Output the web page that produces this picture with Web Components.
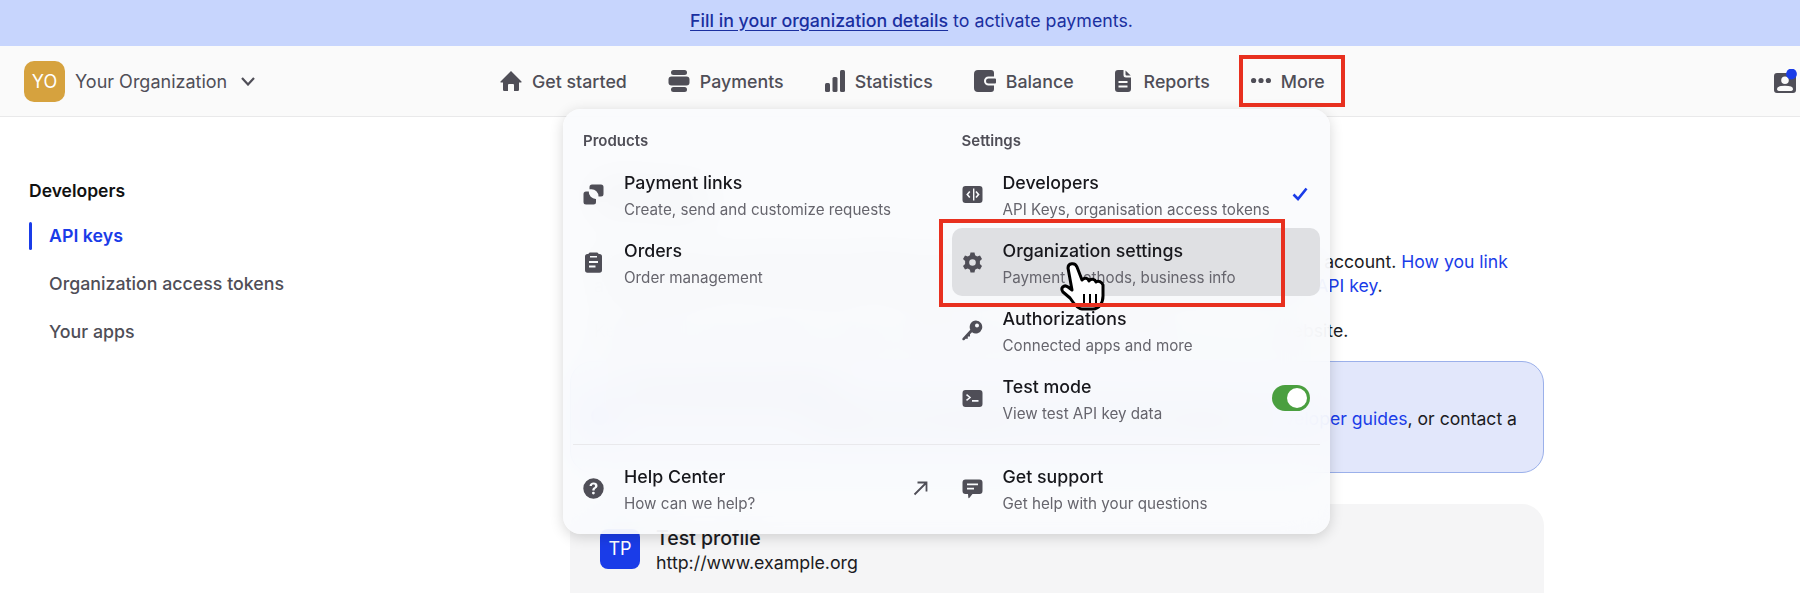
<!DOCTYPE html>
<html lang="en">
<head>
<meta charset="utf-8">
<title>API keys</title>
<style>
  html, body { margin: 0; height: 594px; overflow: hidden; background: #fff; }
  body { font-family: Inter, "Liberation Sans", sans-serif; position: relative; }
</style>
</head>
<body>
<notice-bar><a href="#">Fill in your organization details</a> to activate payments.</notice-bar>

<top-nav>
  <org-switch slot="org">Your Organization</org-switch>
  <nav-item>
    <svg slot="icon" width="22" height="22" viewBox="0 0 22 22"><path d="M11 1 L21.500 11.500 Q21.800 12.500 20.800 12.600 L19 12.600 V19.800 Q19 21 17.800 21 H14 V15 Q14 14 13 14 H9 Q8 14 8 15 V21 H4.200 Q3 21 3 19.800 V12.600 H1.200 Q.2 12.500 .5 11.500 Z"/></svg>
    Get started
  </nav-item>
  <nav-item>
    <svg slot="icon" width="22" height="22" viewBox="0 0 22 22"><rect x="3" y="0" width="16" height="5" rx="2.500"/><rect x="0.500" y="6.500" width="21" height="9" rx="3"/><rect x="3" y="17" width="16" height="5" rx="2.500"/></svg>
    Payments
  </nav-item>
  <nav-item>
    <svg slot="icon" width="20" height="22" viewBox="0 0 20 22"><rect x="0" y="13" width="5" height="9" rx="1.500"/><rect x="7.500" y="7" width="5" height="15" rx="1.500"/><rect x="15" y="0" width="5" height="22" rx="1.500"/></svg>
    Statistics
  </nav-item>
  <nav-item>
    <svg slot="icon" width="22" height="22" viewBox="0 0 22 22"><path fill-rule="evenodd" d="M4 0 H17 Q20 0 20 3 V6.500 H14.500 A4.500 4.500 0 0 0 14.500 15.500 H20 V19 Q20 22 17 22 H4 Q0 22 0 18 V4 Q0 0 4 0 Z"/><path d="M14.500 8.500 H21 Q22 8.500 22 9.500 V12.500 Q22 13.500 21 13.500 H14.500 A2.500 2.500 0 0 1 14.500 8.500 Z"/></svg>
    Balance
  </nav-item>
  <nav-item>
    <svg slot="icon" width="16" height="22" viewBox="0 0 16 22" style="margin-right:3px"><path fill-rule="evenodd" d="M3 0 H8.500 V5 Q8.500 7.500 11 7.500 H16 V19 Q16 22 13 22 H3 Q0 22 0 19 V3 Q0 0 3 0 Z M3.500 11 V13 H12.500 V11 Z M3.500 15.500 V17.500 H12.500 V15.500 Z"/><path d="M10.500 .4 L15.700 5.500 H11.500 Q10.500 5.500 10.500 4.500 Z"/></svg>
    Reports
  </nav-item>
  <nav-item>
    <svg slot="icon" width="20" height="22" viewBox="0 0 20 22"><circle cx="2.600" cy="10.500" r="2.600"/><circle cx="10" cy="10.500" r="2.600"/><circle cx="17.400" cy="10.500" r="2.600"/></svg>
    More
  </nav-item>
  <svg slot="end" width="24" height="24" viewBox="0 0 24 24"><path fill="#4f4e57" fill-rule="evenodd" d="M4 4 H20 Q23 4 23 7 V21 Q23 24 20 24 H4 Q1 24 1 21 V7 Q1 4 4 4 Z M12 7.500 A3.800 3.800 0 1 0 12 15.100 A3.800 3.800 0 1 0 12 7.500 Z M7 22 H17 Q20 22 20 20 Q20 16.800 12 16.800 Q4 16.800 4 20 Q4 22 7 22 Z"/><circle cx="18.500" cy="5" r="5.400" fill="#1a3ce8"/></svg>
</top-nav>

<page-body>
  <side-nav slot="side"></side-nav>
  <api-content></api-content>
</page-body>

<fly-menu>
  <menu-group slot="products" label="Products">
    <menu-item>
      <svg slot="icon" width="21" height="21" viewBox="0 0 21 21"><path d="M9 0.500 H18 Q20.500 0.500 20.500 3 V10 Q20.500 12.500 18 12.500 H15.500 A7 7 0 0 0 8 5.200 H6.500 V3 Q6.500 .5 9 .5 Z"/><path d="M3 7.500 H5.800 A7 7 0 0 0 13 15 V18 Q13 20.500 10.500 20.500 H3 Q.5 20.500 .5 18 V10 Q.5 7.500 3 7.500 Z"/></svg>
      Payment links
      <span slot="sub">Create, send and customize requests</span>
    </menu-item>
    <menu-item>
      <svg slot="icon" width="21" height="21" viewBox="0 0 21 21"><path fill-rule="evenodd" d="M7 0.500 H14 Q15.500 .5 15.500 2 H16.500 Q19 2 19 4.500 V18 Q19 20.800 16.500 20.800 H4.500 Q2 20.800 2 18 V4.500 Q2 2 4.500 2 H5.500 Q5.500 .5 7 .5 Z M7 4 V5.500 H14 V4 Z M6 9 V11 H15 V9 Z M6 13.500 V15.500 H12.500 V13.500 Z"/></svg>
      Orders
      <span slot="sub">Order management</span>
    </menu-item>
  </menu-group>

  <menu-group slot="settings" label="Settings">
    <menu-item>
      <svg slot="icon" width="21" height="21" viewBox="0 0 21 21"><path fill-rule="evenodd" d="M3.500 2 H17.500 Q20.500 2 20.500 5 V16 Q20.500 19 17.500 19 H3.500 Q.5 19 .5 16 V5 Q.5 2 3.500 2 Z M7.200 7 L4.200 10.500 L7.200 14 L8.400 13 L6.300 10.500 L8.400 8 Z M12.400 4.500 H11 V16.500 H12.400 Z M14.600 7 L13.400 8 L15.500 10.500 L13.400 13 L14.600 14 L17.600 10.500 Z"/></svg>
      Developers
      <span slot="sub">API Keys, organisation access tokens</span>
      <svg slot="end" width="16" height="14" viewBox="0 0 16 14" fill="none" stroke="#1a3ce8" stroke-width="2.600" style="margin-right:2px"><path d="M1.500 7.500 L6 12 L14.500 1.500"/></svg>
    </menu-item>
    <menu-item active>
      <svg slot="icon" width="21" height="21" viewBox="0 0 21 21"><path fill-rule="evenodd" d="M8.500 .5 H12.500 L13.100 3.300 L15.200 4.500 L18 3.600 L20 7 L17.900 9 V12 L20 14 L18 17.400 L15.200 16.500 L13.100 17.700 L12.500 20.500 H8.500 L7.900 17.700 L5.800 16.500 L3 17.400 L1 14 L3.100 12 V9 L1 7 L3 3.600 L5.800 4.500 L7.900 3.300 Z M10.500 7.200 A3.300 3.300 0 1 0 10.500 13.800 A3.300 3.300 0 1 0 10.500 7.200 Z"/></svg>
      Organization settings
      <span slot="sub">Payment methods, business info</span>
    </menu-item>
    <menu-item>
      <svg slot="icon" width="21" height="21" viewBox="0 0 21 21"><path fill-rule="evenodd" d="M14 0.500 A6.500 6.500 0 1 1 10 12.300 L8 14.300 V16.500 H5.800 V18.700 H3.600 L2.500 20 Q1.200 20.800 .5 19.800 Q0 19 .8 18 L8.300 9.800 A6.500 6.500 0 0 1 14 .5 Z M15 3.500 A2 2 0 1 0 15 7.500 A2 2 0 1 0 15 3.500 Z"/></svg>
      Authorizations
      <span slot="sub">Connected apps and more</span>
    </menu-item>
    <menu-item>
      <svg slot="icon" width="21" height="21" viewBox="0 0 21 21"><path fill-rule="evenodd" d="M3.500 2 H17.500 Q20.500 2 20.500 5 V16 Q20.500 19 17.500 19 H3.500 Q.5 19 .5 16 V5 Q.5 2 3.500 2 Z M5 6 L4 7.200 L7 9.500 L4 11.800 L5 13 L9.200 9.500 Z M10 12 V13.800 H16.500 V12 Z"/></svg>
      Test mode
      <span slot="sub">View test API key data</span>
      <toggle-switch slot="end"></toggle-switch>
    </menu-item>
  </menu-group>

  <menu-item slot="foot-left">
    <svg slot="icon" width="21" height="21" viewBox="0 0 21 21"><path fill-rule="evenodd" d="M10.500 .3 A10.200 10.200 0 1 0 10.500 20.700 A10.200 10.200 0 1 0 10.500 .3 Z M10.600 4.500 C8.200 4.500 6.700 5.800 6.500 8 H8.900 C9 7.100 9.600 6.600 10.500 6.600 C11.400 6.600 12 7.100 12 7.900 C12 8.600 11.600 9 10.800 9.600 C9.700 10.400 9.300 11.100 9.300 12.600 H11.600 C11.600 11.700 11.800 11.300 12.700 10.600 C13.700 9.900 14.500 9.100 14.500 7.700 C14.500 5.700 12.900 4.500 10.600 4.500 Z M10.400 13.700 A1.400 1.400 0 1 0 10.400 16.500 A1.400 1.400 0 1 0 10.400 13.700 Z"/></svg>
    Help Center
    <span slot="sub">How can we help?</span>
    <svg slot="end" width="15" height="15" viewBox="0 0 15 15" fill="none" stroke="#4f4e57" stroke-width="1.800" style="margin-right:4px"><path d="M1.500 13.500 L13.500 1.500 M4.500 1.500 H13.500 V10.500"/></svg>
  </menu-item>
  <menu-item slot="foot-right">
    <svg slot="icon" width="21" height="21" viewBox="0 0 21 21"><path fill-rule="evenodd" d="M3.500 1.500 H17.500 Q20.500 1.500 20.500 4.500 V13 Q20.500 16 17.500 16 H10.500 L7.500 19.800 Q6.500 20.600 6.300 19.500 L6 16 H3.500 Q.5 16 .5 13 V4.500 Q.5 1.500 3.500 1.500 Z M5 5.500 V7.300 H16 V5.500 Z M5 9.800 V11.600 H12 V9.800 Z"/></svg>
    Get support
    <span slot="sub">Get help with your questions</span>
  </menu-item>
</fly-menu>

<hand-cursor></hand-cursor>
<mark-box style="left:1239px;top:55px;width:106px;height:52px"></mark-box>
<mark-box style="left:939px;top:219px;width:346px;height:88px"></mark-box>

<script>
const TEXT = "#4f4e57";
const BLUE = "#1a3ce8";

class NoticeBar extends HTMLElement {
  connectedCallback() {
    this.attachShadow({ mode: "open" }).innerHTML = `
      <style>
        :host { display:flex; align-items:center; justify-content:center; height:46px; box-sizing:border-box; padding:0 0 6px 23px;
          background:#c7d5fd; color:#1a2fa0; font-size:17.8px; font-weight:400; }
        ::slotted(a) { color:#1a2fa0; font-weight:500; text-decoration:underline; text-underline-offset:3px; }
      </style>
      <div><slot></slot></div>`;
  }
}
customElements.define("notice-bar", NoticeBar);

class OrgSwitch extends HTMLElement {
  connectedCallback() {
    this.attachShadow({ mode: "open" }).innerHTML = `
      <style>
        :host { display:flex; align-items:center; color:${TEXT}; font-size:18px; }
        .logo { width:41px; height:41px; border-radius:10px; background:#d6a23e; color:#fff;
          display:flex; align-items:center; justify-content:center; font-size:18px; margin-right:10px; }
        svg { margin-left:14px; }
      </style>
      <span class="logo">YO</span>
      <slot></slot>
      <svg width="14" height="9" viewBox="0 0 14 9" fill="none" stroke="${TEXT}" stroke-width="2.200"><path d="M1 1 L7 7.500 L13 1"/></svg>`;
  }
}
customElements.define("org-switch", OrgSwitch);

class TopNav extends HTMLElement {
  connectedCallback() {
    this.attachShadow({ mode: "open" }).innerHTML = `
      <style>
        :host { display:grid; grid-template-columns:476px auto 1fr; align-items:center; height:71px;
          box-sizing:border-box; padding:0 3px 0 24px; background:#fafafa; border-bottom:1px solid #e9e9ea; }
        nav { display:flex; gap:41px; }
        .end { justify-self:end; display:flex; }
      </style>
      <slot name="org"></slot>
      <nav><slot></slot></nav>
      <div class="end"><slot name="end"></slot></div>`;
  }
}
customElements.define("top-nav", TopNav);

class NavItem extends HTMLElement {
  connectedCallback() {
    this.attachShadow({ mode: "open" }).innerHTML = `
      <style>
        :host { display:flex; align-items:center; gap:10px; color:${TEXT}; font-size:17.8px; font-weight:500; }
        ::slotted(svg) { fill:${TEXT}; display:block; }
      </style>
      <slot name="icon"></slot><span><slot></slot></span>`;
  }
}
customElements.define("nav-item", NavItem);

class PageBody extends HTMLElement {
  connectedCallback() {
    this.attachShadow({ mode: "open" }).innerHTML = `
      <style>
        :host { display:grid; grid-template-columns:570px 974px; align-items:start; }
      </style>
      <slot name="side"></slot>
      <slot></slot>`;
  }
}
customElements.define("page-body", PageBody);

class SideNav extends HTMLElement {
  connectedCallback() {
    this.attachShadow({ mode: "open" }).innerHTML = `
      <style>
        :host { display:block; padding:61px 0 0 29px; font-size:17.8px; color:${TEXT}; }
        h3 { margin:0 0 8px; font-size:17.5px; line-height:26px; font-weight:600; color:#111; }
        a { display:block; height:48px; line-height:48px; padding-left:20px; box-sizing:border-box; font-weight:500; }
        a.on { color:${BLUE}; font-weight:600; position:relative; }
        a.on::before { content:""; position:absolute; left:0; top:10px; width:3px; height:28px; background:${BLUE}; border-radius:2px; }
      </style>
      <h3>Developers</h3>
      <a class="on">API keys</a>
      <a>Organization access tokens</a>
      <a>Your apps</a>`;
  }
}
customElements.define("side-nav", SideNav);

class ApiContent extends HTMLElement {
  connectedCallback() {
    this.attachShadow({ mode: "open" }).innerHTML = `
      <style>
        :host { display:block; padding-top:60px; color:#1b1b22; font-size:17.6px; line-height:24px; }
        h1 { margin:0 0 33px; font-size:28px; line-height:40px; font-weight:600; padding-left:24px; }
        p { margin:0 0 21px; padding-left:24px; white-space:nowrap; }
        a { color:${BLUE}; }
        .callout { margin-top:-3px; height:112px; box-sizing:border-box; border:1px solid #9bb0ea; border-radius:22px;
          background:#e2e7fb; display:flex; gap:16px; padding:15px 26px 0 20px; line-height:28px; }
        .callout i { flex:none; width:18px; height:18px; margin-top:30px; border-radius:50%; background:${BLUE}; }
        .callout div { flex:1; text-align:right; white-space:nowrap; }
        .callout b { display:block; text-align:left; font-weight:600; }
        .card { margin-top:31px; height:89px; background:#f5f5f6; border-radius:22px 22px 0 0; padding:25px 30px 0; box-sizing:border-box; }
        .row { display:flex; gap:16px; padding-bottom:20px; border-bottom:1px solid #e4e4e6; }
        .tp { width:40px; height:40px; border-radius:8px; background:${BLUE}; color:#fff; font-size:18px;
          display:flex; align-items:center; justify-content:center; }
        .name { font-size:19.5px; font-weight:500; line-height:20px; margin-top:-1px; }
        .url { line-height:26px; font-size:17.8px; margin-top:2px; }
      </style>
      <h1>API keys</h1>
      <p>API keys let you connect your website or online store to this payment platform and your account. <a>How you link</a><br>
      a key depends on your software, so please check the documentation about using <a>your API key</a>.</p>
      <p>Keep all your keys private, and never share them with anyone outside of your own website.</p>
      <div class="callout"><i></i><div><b>Do you need some help?</b>Read the documentation for the API, look through our <a>developer guides</a>, or contact a</div></div>
      <div class="card"><div class="row"><span class="tp">TP</span><div><div class="name">Test profile</div><div class="url">http://www.example.org</div></div></div></div>`;
  }
}
customElements.define("api-content", ApiContent);

class FlyMenu extends HTMLElement {
  connectedCallback() {
    this.attachShadow({ mode: "open" }).innerHTML = `
      <style>
        :host { position:absolute; left:563px; top:109px; width:767px; height:425px; box-sizing:border-box; padding:10px;
          border-radius:18px; background:rgba(250,251,253,.9); -webkit-backdrop-filter:blur(20px); backdrop-filter:blur(20px);
          box-shadow:0 3px 14px rgba(0,0,0,.16); }
        .cols { display:grid; grid-template-columns:1fr 1fr; column-gap:10px; }
        hr { margin:12px 0 9px; border:0; border-top:1px solid #e9e9ec; }
      </style>
      <div class="cols"><slot name="products"></slot><slot name="settings"></slot></div>
      <hr>
      <div class="cols"><slot name="foot-left"></slot><slot name="foot-right"></slot></div>`;
  }
}
customElements.define("fly-menu", FlyMenu);

class MenuGroup extends HTMLElement {
  connectedCallback() {
    this.attachShadow({ mode: "open" }).innerHTML = `
      <style>
        :host { display:block; }
        .label { height:41px; line-height:43px; padding-left:10px; font-size:15px; font-weight:600; color:${TEXT}; }
      </style>
      <div class="label">${this.getAttribute("label")}</div>
      <slot></slot>`;
  }
}
customElements.define("menu-group", MenuGroup);

class MenuItem extends HTMLElement {
  connectedCallback() {
    this.attachShadow({ mode: "open" }).innerHTML = `
      <style>
        :host { display:flex; align-items:center; height:68px; padding:0 10px; box-sizing:border-box; border-radius:10px; }
        :host([active]) { background:#dfe0e3; }
        .icon { width:21px; margin-right:20px; display:flex; }
        ::slotted(svg[slot="icon"]) { fill:${TEXT}; }
        .text { flex:1; white-space:nowrap; padding-top:5px; }
        .title { font-size:17.8px; line-height:26px; font-weight:500; color:#17171c; }
        .sub { font-size:15.2px; line-height:28px; color:#66656d; }
        .end { display:flex; }
      </style>
      <span class="icon"><slot name="icon"></slot></span>
      <div class="text"><div class="title"><slot></slot></div><div class="sub"><slot name="sub"></slot></div></div>
      <span class="end"><slot name="end"></slot></span>`;
  }
}
customElements.define("menu-item", MenuItem);

class ToggleSwitch extends HTMLElement {
  connectedCallback() {
    this.attachShadow({ mode: "open" }).innerHTML = `
      <style>
        :host { display:block; width:38px; height:26px; box-sizing:border-box; padding:3px;
          border-radius:13px; background:#4a9f3f; }
        div { width:20px; height:20px; margin-left:12px; border-radius:50%; background:#fff; }
      </style>
      <div></div>`;
  }
}
customElements.define("toggle-switch", ToggleSwitch);

class HandCursor extends HTMLElement {
  connectedCallback() {
    this.attachShadow({ mode: "open" }).innerHTML = `
      <style>
        :host { position:absolute; left:1060px; top:262px; width:46px; height:50px; }
        svg { display:block; }
      </style>
      <svg width="46" height="50" viewBox="0 0 46 50">
        <path d="M8 6 C8 1 15 0 17 5 L22 18 C25 15 28 16 29 19 C31 16 35 17 36 20 C38 18 42 20 43 23 L43 34 C43 41 39 47 33 47 L22 47 C18 47 14 42 10 36 L3 30 C0 26 4 22 8 25 L12 28 Z" fill="#fff" stroke="#000" stroke-width="3" stroke-linejoin="round"/>
        <path d="M24 32 V42 M30 32 V42 M36 32 V42" stroke="#000" stroke-width="2"/>
      </svg>`;
  }
}
customElements.define("hand-cursor", HandCursor);

class MarkBox extends HTMLElement {
  connectedCallback() {
    this.attachShadow({ mode: "open" }).innerHTML = `
      <style>
        :host { position:absolute; box-sizing:border-box; border:4px solid #e8301f; pointer-events:none; }
      </style>`;
  }
}
customElements.define("mark-box", MarkBox);
</script>
</body>
</html>
